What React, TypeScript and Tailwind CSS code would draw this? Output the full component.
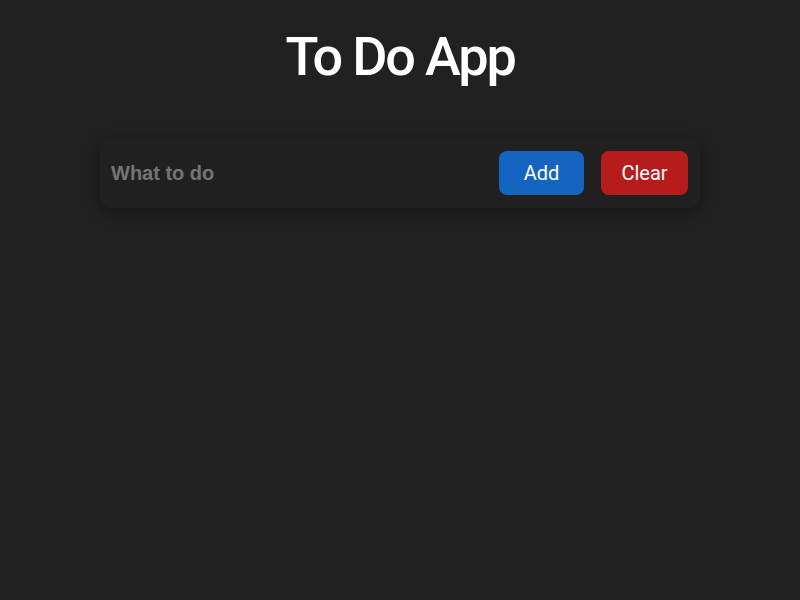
export default function App() {
  return (
    <div className="min-h-screen w-full bg-[#212121] font-['Roboto',sans-serif] text-white">
      <h1 className="pt-[27px] text-center text-[54px] font-medium leading-[60px] tracking-[-0.04em]">To Do App</h1>
      <div className="mx-auto mt-[51px] flex h-[70px] w-[600px] items-center rounded-[10px] bg-[#202020] pl-[11px] pr-[12px] shadow-[0_4px_18px_rgba(0,0,0,0.35)]">
        <input
          placeholder="What to do"
          className="min-w-0 flex-1 bg-transparent font-['Liberation_Sans',sans-serif] text-[20px] font-bold text-white outline-none placeholder:text-[#757575]"
        />
        <button className="h-[44px] w-[85px] rounded-lg bg-[#1565c0] text-[20px] text-white">Add</button>
        <button className="ml-[17px] h-[44px] w-[87px] rounded-lg bg-[#b71c1c] text-[20px] text-white">Clear</button>
      </div>
    </div>
  )
}
